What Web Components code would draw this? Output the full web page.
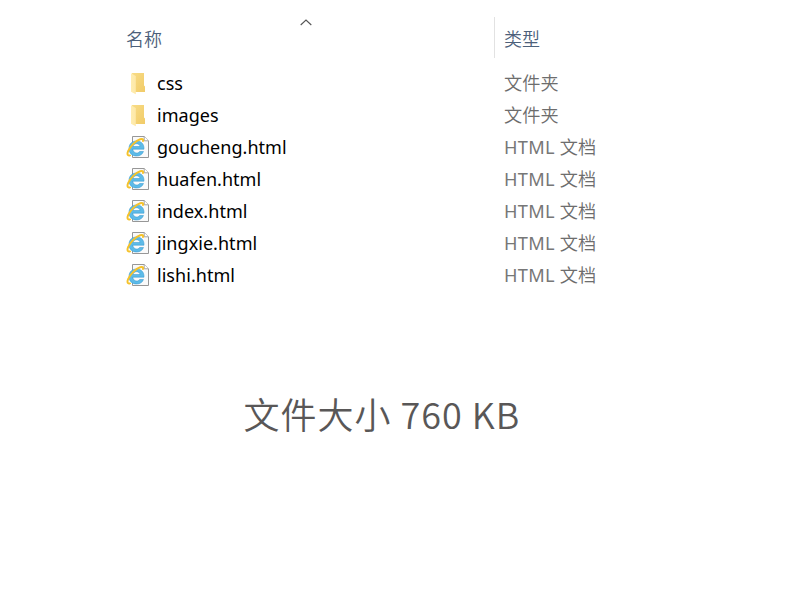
<!DOCTYPE html>
<html lang="zh-CN">
<head>
<meta charset="utf-8">
<title>文件列表</title>
<style>
html,body{margin:0;background:#fff}
body{width:800px;height:600px;overflow:hidden}
</style>
</head>
<body>
<file-explorer>
  <list-header></list-header>
  <file-row kind="folder" type="文件夹">css</file-row>
  <file-row kind="folder" type="文件夹">images</file-row>
  <file-row kind="html" type="HTML 文档">goucheng.html</file-row>
  <file-row kind="html" type="HTML 文档">huafen.html</file-row>
  <file-row kind="html" type="HTML 文档">index.html</file-row>
  <file-row kind="html" type="HTML 文档">jingxie.html</file-row>
  <file-row kind="html" type="HTML 文档">lishi.html</file-row>
  <size-caption slot="caption">文件大小 760 KB</size-caption>
</file-explorer>
<script>
class Base extends HTMLElement{
  connectedCallback(){ if(!this.shadowRoot) this.attachShadow({mode:'open'}).innerHTML=this.view(); }
}
customElements.define('file-explorer',class extends Base{
  view(){return `<style>
    :host{display:flex;flex-direction:column;height:600px;box-sizing:border-box;padding:17px 0 0 126px;font-family:"Noto Sans","Noto Sans CJK SC",sans-serif;font-size:18px}
    .list{display:flex;flex-direction:column}
    .foot{padding-top:95px}
  </style><div class="list"><slot></slot></div><div class="foot"><slot name="caption"></slot></div>`}
});
customElements.define('list-header',class extends Base{
  view(){return `<style>
    :host{display:grid;grid-template-columns:368px 1fr;height:41px;margin-bottom:9px;color:#4c607a;font-family:"Noto Sans CJK SC",sans-serif;font-weight:350}
    .name{position:relative;line-height:43px;height:41px}
    .type{border-left:1px solid #e2e2e2;padding-left:9px;line-height:43px;height:41px}
    svg{position:absolute;left:174px;top:2px}
  </style><div class="name">名称<svg width="12" height="7" viewBox="0 0 12 7"><path d="M.7 6 6 1.1 11.3 6" fill="none" stroke="#555" stroke-width="1.1"/></svg></div><div class="type">类型</div>`}
});
customElements.define('file-icon',class extends Base{
  view(){
    const folder=`<svg width="24" height="24" viewBox="0 0 24 24">
      <defs><linearGradient id="b" x2="1" y2="1"><stop stop-color="#f8dc86"/><stop offset="1" stop-color="#f1cb68"/></linearGradient>
      <linearGradient id="f" x2="1"><stop stop-color="#ffedb0"/><stop offset="1" stop-color="#fde8a8"/></linearGradient></defs>
      <path d="M6 2H18V14.5L19 15.5V21H8z" fill="url(#b)"/><path d="M5 2.3 9.8 5V23.3L5 20.8z" fill="url(#f)"/></svg>`;
    const html=`<svg width="24" height="24" viewBox="0 0 24 24">
      <path d="M6.5 1.5H18.2L22.5 5.8V22.5H6.5z" fill="#fafafa" stroke="#979797"/><path d="M18.2 1.5V5.8H22.5" fill="#fff" stroke="#a4a4a4"/>
      <path fill-rule="evenodd" d="M18 14.2H6.8C7 16.6 8.6 18 10.7 18 12.1 18 13.1 17.4 13.6 16.5H17.5C16.5 19.3 14 21 10.6 21 6 21 3 18.1 3 13.4 3 8.8 6.1 6 10.6 6 15.2 6 18.3 9 18 14.2zM7 11.5H14C13.8 9.7 12.4 8.7 10.6 8.7 8.7 8.7 7.3 9.7 7 11.5z" fill="#5dbbe8" stroke="#2f93cc" stroke-width=".5"/>
      <path d="M4 20.4C1.5 21.1.8 19.2 2.1 16.2 4.2 11.4 9.8 5.5 14.2 4.2c2.2-.7 3.3 0 2.8 1.8" fill="none" stroke="#f5c22b" stroke-width="2" stroke-linecap="round"/></svg>`;
    return `<style>:host{display:block;width:24px;height:24px}svg{display:block}</style>`+(this.getAttribute('kind')==='folder'?folder:html)}
});
customElements.define('file-row',class extends Base{
  view(){return `<style>
    :host{display:grid;grid-template-columns:31px 347px 1fr;grid-template-rows:32px;height:32px;line-height:32px;align-items:center;color:#000;white-space:pre}
    .name{letter-spacing:.04px}
    .type{color:#6d6d6d;font-weight:350;font-family:"Noto Sans CJK SC",sans-serif;font-size:18.2px;line-height:30px;padding-bottom:2px}
    .latin{font:400 18.2px/1 "Noto Sans",sans-serif;color:#777;letter-spacing:.3px}
  </style><file-icon kind="${this.getAttribute('kind')}"></file-icon><span class="name"><slot></slot></span><span class="type">${this.getAttribute('type').replace(/[A-Z]+ /,'<span class="latin">$&</span>')}</span>`}
});
customElements.define('size-caption',class extends Base{
  view(){return `<style>
    :host{display:block;padding-left:117.5px;font:350 36px/54px "Noto Sans CJK SC",sans-serif;letter-spacing:1px;color:#595757;white-space:pre}
  </style><slot></slot>`}
});
</script>
</body>
</html>
